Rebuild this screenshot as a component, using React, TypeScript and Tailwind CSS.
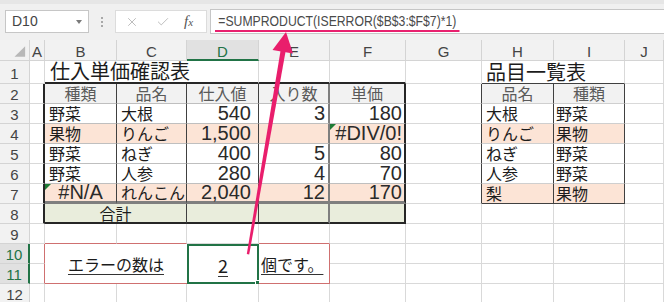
import { Fragment, type ReactNode } from 'react'
import { Check, X } from 'lucide-react'
import { twMerge } from 'tailwind-merge'

type Spec = { v?: ReactNode; c?: string }

const COLS = ['A', 'B', 'C', 'D', 'E', 'F', 'G', 'H', 'I', 'J']
const ROWS = [1, 2, 3, 4, 5, 6, 7, 8, 9, 10, 11, 12]

const base =
  'relative flex min-w-0 items-center whitespace-nowrap border-r border-b border-[#d9d9d9] bg-white px-[3px] text-[16px] leading-[17px] text-[#1c1c1c]'

// table 1 (B2:F8)
const edgeL = 'border-r-2 border-r-[#262626]'
const v1 = 'border-r-[#404040] border-b-[#bfbfbf]'
const vE = 'border-r-2 border-r-[#7f7f7f] border-b-[#bfbfbf]'
const vF = 'border-r-2 border-r-[#262626] border-b-[#bfbfbf]'
const head = 'justify-center bg-[#f2f2f2] text-[#5a5a5a]'
const peach = 'bg-[#fce4d6]'
const total = 'bg-[#e9eddc] border-b-2 border-b-[#262626]'
const sep = 'border-b-[3px] border-b-[#7f7f7f]'
// table 2 (H2:I7)
const v2 = 'border-r-[#404040] border-b-[#cfcfcf]'

const num = (t: string) => (
  <span className="font-['Liberation_Sans',sans-serif] text-[20px] leading-[17px] text-[#2a2a2a]">{t}</span>
)

const Flag = () => (
  <span className="absolute left-0 top-0 size-0 border-t-[6px] border-r-[6px] border-t-[#1e7b34] border-r-transparent" />
)

const t1 = [
  ['野菜', '大根', '540', '3', '180'],
  ['果物', 'りんご', '1,500', '', '#DIV/0!'],
  ['野菜', 'ねぎ', '400', '5', '80'],
  ['野菜', '人参', '280', '4', '70'],
  ['#N/A', 'れんこん', '2,040', '12', '170'],
]

const t2 = [
  ['大根', '野菜'],
  ['りんご', '果物'],
  ['ねぎ', '野菜'],
  ['人参', '野菜'],
  ['梨', '果物'],
]

const cells: Record<string, Spec> = {
  B1: {
    v: <span className="text-[20px] leading-[20px]">仕入単価確認表</span>,
    c: 'col-span-3 items-end pb-[1px] pl-[5px] border-b-2 border-b-[#262626]',
  },
  E1: { c: 'border-b-2 border-b-[#262626]' },
  F1: { c: 'border-b-2 border-b-[#262626]' },
  H1: {
    v: <span className="text-[20px] leading-[20px]">品目一覧表</span>,
    c: 'col-span-2 items-end pb-[1px] pl-[4px] border-b-[#404040]',
  },
  B2: { v: '種類', c: twMerge(v1, head) },
  C2: { v: '品名', c: twMerge(v1, head) },
  D2: { v: '仕入値', c: twMerge(v1, head) },
  E2: { v: '入り数', c: twMerge(vE, head) },
  F2: { v: '単価', c: twMerge(vF, head) },
  H2: { v: '品名', c: twMerge(v2, head) },
  I2: { v: '種類', c: twMerge(v2, head) },
  B8: { v: '合計', c: twMerge(v1, total, 'col-span-2 justify-center') },
  D8: { c: twMerge(v1, total) },
  E8: { c: twMerge(vE, total) },
  F8: { c: twMerge(vF, total) },
  B9: { c: 'border-b-[#cf7070]' },
  C9: { c: 'border-b-[#cf7070]' },
  E9: { c: 'border-b-[#cf7070]' },
  A10: { c: 'border-r-[#cf7070]' },
  A11: { c: 'border-r-[#cf7070]' },
  B10: {
    v: <span className="underline decoration-[#333] underline-offset-[3px]">エラーの数は</span>,
    c: 'col-span-2 row-span-2 justify-center border-r-0 border-b-[#cf7070] pt-[2px]',
  },
  D10: {
    v: (
      <>
        <span className="text-[18px] underline decoration-[#333] underline-offset-[3px]">2</span>
        <span className="absolute -bottom-[4px] -right-[4px] size-[6px] border border-white bg-[#217346]" />
      </>
    ),
    c: 'row-span-2 justify-center border-2 border-[#217346] pt-[2px]',
  },
  E10: {
    v: <span className="underline decoration-[#333] underline-offset-[3px]">個です。</span>,
    c: 'row-span-2 pl-[2px] pt-[2px] border-r-[#cf7070] border-b-[#cf7070]',
  },
}

for (const r of [2, 3, 4, 5, 6, 7, 8]) cells['A' + r] = { c: edgeL }
for (const r of [2, 3, 4, 5, 6, 7]) cells['G' + r] = { c: 'border-r-[#404040]' }

t1.forEach((row, i) => {
  const r = i + 3
  const bg = r === 4 || r === 7 ? peach : ''
  const bottom = r === 7 ? sep : ''
  const err = row[0] === '#N/A'
  cells['B' + r] = err
    ? { v: <><Flag />{num(row[0])}</>, c: twMerge(v1, bg, bottom, 'justify-center') }
    : { v: row[0], c: twMerge(v1, bg, bottom, 'pl-[4px]') }
  cells['C' + r] = { v: row[1], c: twMerge(v1, bg, bottom, 'pl-[4px]') }
  cells['D' + r] = { v: num(row[2]), c: twMerge(v1, bg, bottom, 'justify-end pr-[7px]') }
  cells['E' + r] = { v: num(row[3]), c: twMerge(vE, bg, bottom, 'justify-end pr-[3px]') }
  cells['F' + r] = {
    v: row[4].startsWith('#') ? <><Flag />{num(row[4])}</> : num(row[4]),
    c: twMerge(vF, bg, bottom, 'justify-end pr-[2px]'),
  }
})

t2.forEach((row, i) => {
  const r = i + 3
  const bg = r === 4 || r === 7 ? peach : ''
  const bottom = r === 7 ? 'border-b-[#404040]' : ''
  cells['H' + r] = { v: row[0], c: twMerge(v2, bg, bottom, 'pl-[4px]') }
  cells['I' + r] = { v: row[1], c: twMerge(v2, bg, bottom, 'pl-[2px]') }
})

const covered = new Set(['C1', 'D1', 'I1', 'C8', 'C10', 'B11', 'C11', 'D11', 'E11'])

const hdr =
  "flex items-center justify-center border-r border-b border-[#d4d4d4] bg-[#f2f2f2] font-['Liberation_Sans',sans-serif] text-[15px] leading-[15px] text-[#444]"

function FormulaBar() {
  return (
    <div className="flex h-[40px] items-start border-t-[4px] border-t-[#e6e6e6] bg-[#f0f0f0] pt-[6px] font-['Liberation_Sans',sans-serif]">
      <div className="ml-[5px] flex h-[23px] w-[84px] items-center border border-[#c6c6c6] bg-white pl-[6px] text-[14px] text-[#444]">
        D10
        <svg className="ml-auto mr-[6px]" width="6" height="4" viewBox="0 0 6 4">
          <path d="M0 0h6L3 4z" fill="#7a7a7a" />
        </svg>
      </div>
      <div className="flex h-[23px] w-[26px] flex-col items-center justify-center gap-[2px]">
        <span className="size-[2px] bg-[#a8a8a8]" />
        <span className="size-[2px] bg-[#a8a8a8]" />
        <span className="size-[2px] bg-[#a8a8a8]" />
      </div>
      <div className="flex h-[23px] w-[92px] items-center border border-[#dcdcdc] bg-white">
        <X className="ml-[9px] size-[14px] text-[#b4b4b4]" strokeWidth={1.5} />
        <Check className="ml-[17px] size-[14px] text-[#b4b4b4]" strokeWidth={1.5} />
        <span className="ml-[14px] font-['Liberation_Serif',serif] text-[15px] italic text-[#555]">
          f<span className="text-[11px]">x</span>
        </span>
      </div>
      <div className="-mt-[1px] ml-[3px] flex h-[25px] flex-1 items-center border border-r-0 border-[#c6c6c6] bg-white pl-[4px]">
        <span className="inline-block origin-left scale-x-[0.815] border-b-2 border-[#e8206e] px-[4px] pb-[1px] text-[15px] leading-[17px] text-[#4a4a4a]">
          =SUMPRODUCT(ISERROR($B$3:$F$7)*1)
        </span>
      </div>
    </div>
  )
}

export default function App() {
  return (
    <div className="relative h-[302px] w-[664px] overflow-hidden bg-white font-['Noto_Sans_CJK_JP',sans-serif]">
      <FormulaBar />
      <div className="grid grid-cols-[30px_15px_72px_70px_72px_71px_76px_76px_72px_71px_39px] grid-rows-[21px_23px_repeat(11,20px)]">
        {/* column headers */}
        <div className={hdr}>
          <svg width="30" height="21" viewBox="0 0 30 21">
            <path d="M15 17L26 6V17Z" fill="#b8b8b8" />
          </svg>
        </div>
        {COLS.map((col) => (
          <div
            key={col}
            className={twMerge(
              hdr,
              'pt-[3px]',
              col === 'D' && 'border-b-2 border-b-[#217346] bg-[#e1e1e1] text-[#217346]',
            )}
          >
            {col}
          </div>
        ))}

        {ROWS.map((r) => (
          <Fragment key={r}>
            <div
              className={twMerge(
                hdr,
                'pt-[2px]',
                (r === 10 || r === 11) && 'border-r-2 border-r-[#217346] bg-[#e1e1e1] text-[#217346]',
              )}
            >
              {r}
            </div>
            {COLS.map((col) => {
              const k = col + r
              if (covered.has(k)) return null
              const s = cells[k] ?? {}
              return (
                <div key={k} className={twMerge(base, s.c)}>
                  {s.v}
                </div>
              )
            })}
          </Fragment>
        ))}
      </div>

      {/* pink arrow pointing at the formula */}
      <svg className="pointer-events-none absolute left-0 top-0" width="664" height="302" viewBox="0 0 664 302">
        <polygon points="246.8,254 249.2,254.4 286,49 281,48" fill="#e91e6c" />
        <polygon points="286,32 272.5,50 293,53.5" fill="#e91e6c" />
      </svg>
    </div>
  )
}
